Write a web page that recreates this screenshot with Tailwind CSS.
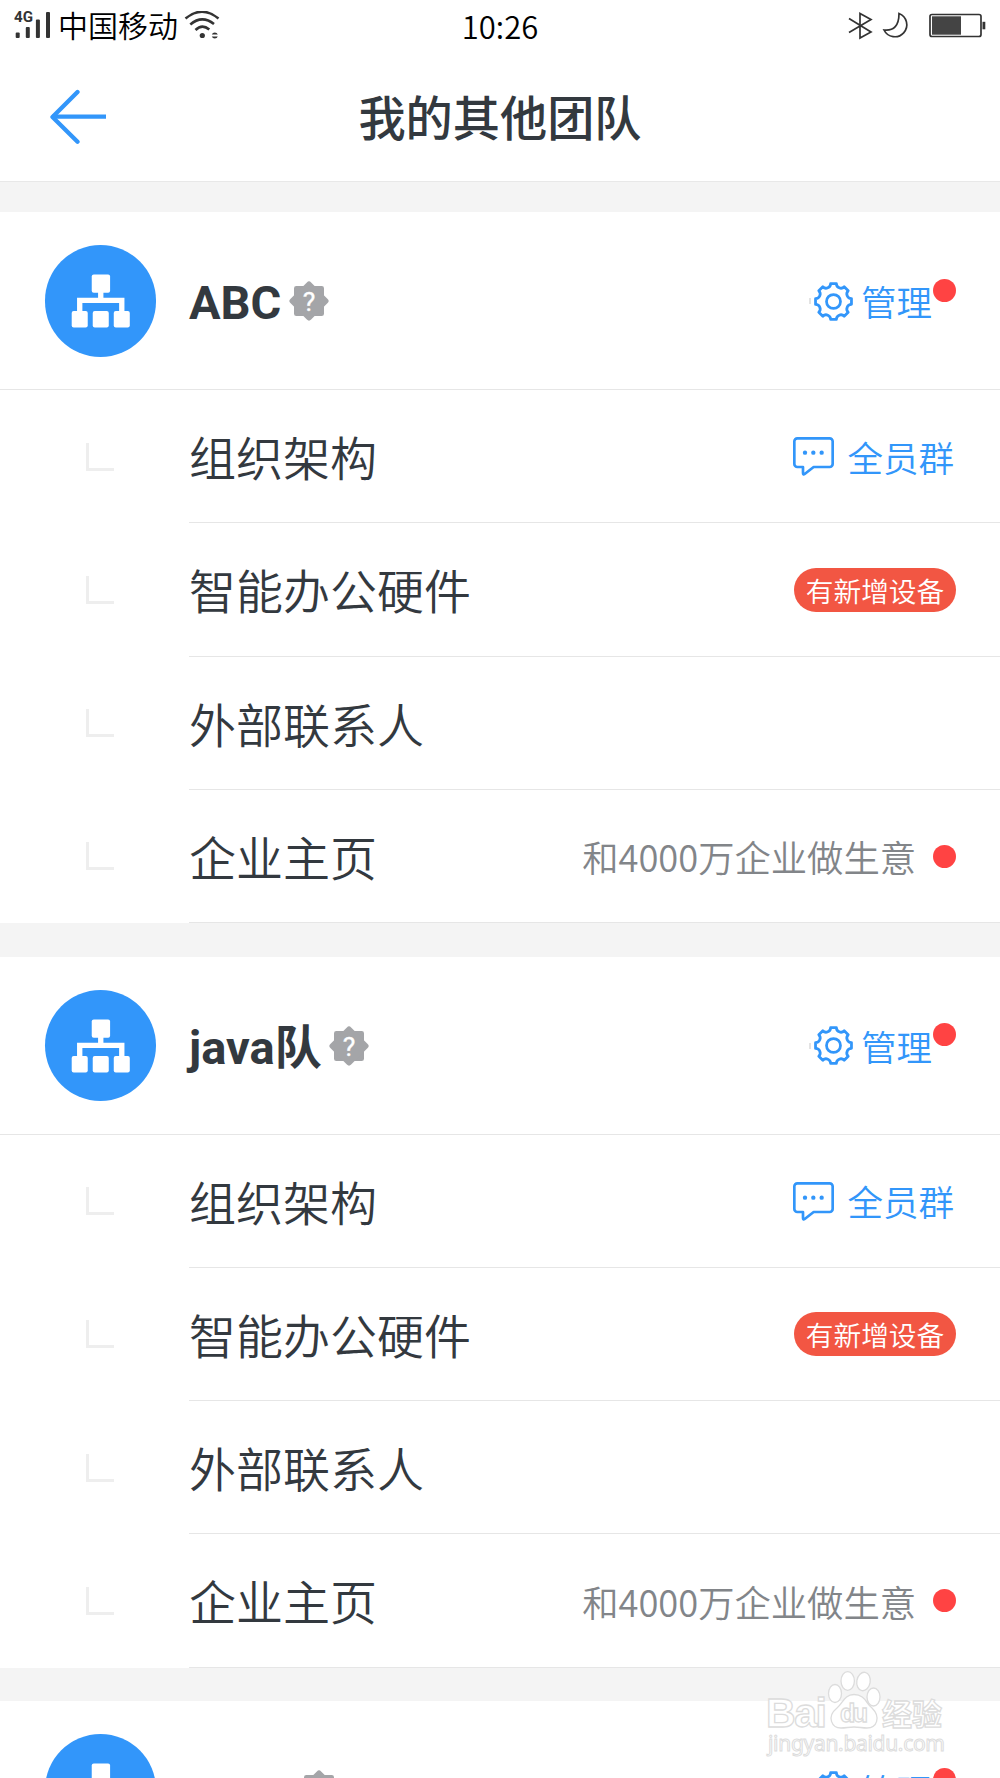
<!DOCTYPE html>
<html lang="zh-CN">

<head>
    <meta charset="UTF-8">
    <meta name="viewport" content="width=device-width, initial-scale=1.0">
    <title>我的其他团队</title>
    <script src="https://cdn.jsdelivr.net/npm/@tailwindcss/browser@4"></script>
</head>

<body class="bg-[#f4f4f4] font-['Noto_Sans_CJK_SC',sans-serif] font-[350] text-[#33393f] w-[1000px] h-[1778px] overflow-hidden relative">
    <!-- shared icons -->
    <svg class="hidden">
        <symbol id="org" viewBox="0 0 334 334">
            <g fill="#fff">
                <rect x="140" y="88" width="55" height="55" rx="6" />
                <rect x="80" y="198" width="48" height="49" rx="6" />
                <rect x="143" y="198" width="48" height="49" rx="6" />
                <rect x="206" y="198" width="48" height="49" rx="6" />
            </g>
            <path d="M167 140v26M104 200v-34h126v34" fill="none" stroke="#fff" stroke-width="16" />
        </symbol>
        <symbol id="unverified" viewBox="-60 -60 120 120">
            <rect x="-45" y="-45" width="90" height="90" rx="7" fill="#a4a5a8" />
            <rect x="-44" y="-44" width="88" height="88" rx="9" fill="#a4a5a8" transform="rotate(45)" />
            <text x="0" y="30" text-anchor="middle" font-family="Roboto, sans-serif" font-size="80" font-weight="400" fill="#fff" stroke="#fff">?</text>
        </symbol>
        <symbol id="gear" viewBox="-60 -60 120 120">
            <g fill="none" stroke="#3296fa" stroke-width="8.5" stroke-linejoin="round">
                <path d="M8.8-55.3A14 14 0 0 0 32.9-45.3L45.3-32.9A14 14 0 0 0 55.3-8.8V8.8A14 14 0 0 0 45.3 32.9L32.9 45.3A14 14 0 0 0 8.8 55.3H-8.8A14 14 0 0 0-32.9 45.3L-45.3 32.9A14 14 0 0 0-55.3 8.8V-8.8A14 14 0 0 0-45.3-32.9L-32.9-45.3A14 14 0 0 0-8.8-55.3Z" />
                <circle r="21.5" />
            </g>
        </symbol>
        <symbol id="chat" viewBox="0 0 123 117">
            <path d="M13 4h97a9 9 0 0 1 9 9v68a9 9 0 0 1-9 9H62L35 111q-5 4-5-3V90H13a9 9 0 0 1-9-9V13a9 9 0 0 1 9-9z" fill="none" stroke="#3296fa" stroke-width="8" stroke-linejoin="round" />
            <g fill="#3296fa">
                <circle cx="36" cy="47" r="6.5" />
                <circle cx="61" cy="47" r="6.5" />
                <circle cx="86" cy="47" r="6.5" />
            </g>
        </symbol>
    </svg>

    <header class="bg-white border-b border-[#e8e8e8] h-[182px]">
        <div class="h-[52px] grid grid-cols-3 items-center px-3.5 text-black">
            <div class="flex items-center">
                <svg class="w-[38px] h-[30px]" viewBox="0 0 38 30" fill="#333">
                    <text x="0" y="11" font-family="Roboto, sans-serif" font-size="14" font-weight="700" textLength="19" lengthAdjust="spacingAndGlyphs">4G</text>
                    <rect x="1.7" y="21.5" width="4" height="5.5" rx="1" />
                    <rect x="11.8" y="16" width="4" height="11" rx="1" />
                    <rect x="21.9" y="8.5" width="4" height="18.5" rx="1" />
                    <rect x="32" y="1" width="4" height="26" rx="1" />
                </svg>
                <span class="text-[30px] leading-none ml-1.5 pb-1">中国移动</span>
                <svg class="w-[36px] h-[30px] ml-1.5" viewBox="0 0 36 30">
                    <g fill="none" stroke="#333" stroke-width="2.6">
                        <path d="M1.5 7.5Q18-6 34.5 7.5" />
                        <path d="M6.3 13.500Q18 3.500 30 13" />
                        <path d="M11.5 19Q18 12.500 25.300 18.500" />
                    </g>
                    <circle cx="18.3" cy="24.5" r="2.6" fill="#333" />
                    <path d="M27.8 23.500a3.200 3.200 0 0 1 6 0zM27.800 25.500a3.200 3.200 0 0 0 6 0z" fill="#333" />
                </svg>
            </div>
            <div class="text-[31px] leading-none text-center pb-0.5">10:26</div>
            <svg class="w-[138px] h-[30px] justify-self-end" viewBox="0 0 138 30" fill="none" stroke="#333" stroke-width="1.7">
                <path d="M1 7.500l22 13.500-11 6V2.500l11 6L1 21.500" />
                <path d="M51 2.500q0 18-15 16.500a12 12 0 1 0 15-16.500z" />
                <rect x="82" y="3.5" width="51" height="22" rx="2" />
                <rect x="84" y="5.3" width="29" height="18.4" fill="#444" stroke="none" />
                <rect x="134.5" y="10.8" width="2.8" height="7.5" fill="#333" stroke="none" />
            </svg>
        </div>
        <div class="h-[129px] flex items-center justify-center relative">
            <svg class="absolute left-[49px] top-[37px] w-[58px] h-[56px]" viewBox="0 0 58 56" fill="none" stroke="#3296fa" stroke-width="4.3">
                <path d="M28.5 3L3.500 28l25 24.700" stroke-linecap="round" stroke-linejoin="round" />
                <path d="M3 27.700h54" />
            </svg>
            <h1 class="text-[47.2px] leading-none font-medium pb-0.5">我的其他团队</h1>
        </div>
    </header>

    <main id="teams" class="pt-[30px]"></main>

    <!-- watermark -->
    <svg class="absolute left-[760px] top-[1665px] w-[200px] h-[95px]" viewBox="0 0 200 95" fill="#fff" stroke="#dcdcdc" stroke-width="1.3">
        <text x="6" y="62" font-family="Liberation Sans, sans-serif" font-size="41" font-weight="700" textLength="61">Bai</text>
        <ellipse cx="75" cy="28.5" rx="6.5" ry="9" />
        <ellipse cx="87.7" cy="16" rx="6.7" ry="9.3" />
        <ellipse cx="103.5" cy="16.5" rx="6.7" ry="9.3" transform="rotate(10 103.5 16.5)" />
        <ellipse cx="113.5" cy="32" rx="6.5" ry="9" />
        <path d="M94 29.500c-10 0-11 9-17 13.500-11 9-5 20 4 20 5 0 8-1 13-1s8 1 13 1c10 0 14-11 5-20-6-4.500-7-13.500-18-13.500z" />
        <text x="80" y="57" font-family="Liberation Sans, sans-serif" font-size="25" font-weight="700" textLength="28">du</text>
        <text x="122" y="60" font-family="Noto Sans CJK SC, sans-serif" font-size="30" font-weight="700">经验</text>
        <text x="8" y="85.5" font-family="Noto Sans, sans-serif" font-size="21" font-weight="400" textLength="177" stroke-width="1">jingyan.baidu.com</text>
    </svg>

    <script>
        const teams = [
            { name: 'ABC', open: true },
            { name: 'java队', open: true },
            { name: '', open: false }
        ];

        const dot = '<span class="size-[23px] rounded-full bg-[#ff4343]"></span>';

        const rows = [
            {
                label: '组织架构',
                extra: `<svg class="w-[41px] h-[39px]"><use href="#chat" /></svg>
                    <span class="text-[35.5px] leading-none text-[#3296fa] ml-[13px] mr-0.5">全员群</span>`
            },
            {
                label: '智能办公硬件',
                extra: '<span class="w-[162px] h-[44px] rounded-full bg-[#f25643] text-white text-[27.7px] leading-[44px] text-center">有新增设备</span>'
            },
            { label: '外部联系人', extra: '' },
            {
                label: '企业主页',
                extra: `<span class="text-[36.3px] leading-none text-[#828589] mr-[17px]">和4000万企业做生意</span>${dot}`
            }
        ];

        const renderRow = row => `
            <li class="flex h-[133.25px]">
                <div class="w-[189px] shrink-0 flex items-center pl-[86px]">
                    <i class="size-7 border-l-3 border-b-3 border-[#eee]"></i>
                </div>
                <div class="flex-1 flex items-center border-b border-[#e6e6e6] pt-px pr-11">
                    <span class="text-[47px] leading-none mr-auto pb-0.5">${row.label}</span>
                    ${row.extra}
                </div>
            </li>`;

        const renderTeam = team => `
            <section class="bg-white mb-[33.5px]">
                <div class="h-[178px] flex items-center border-b border-[#e6e6e6] pt-px pl-[44.5px] pr-11">
                    <div class="size-[111.500px] rounded-full bg-[#3296fa] mr-[33px]"><svg class="size-full"><use href="#org" /></svg></div>
                    <h2 class="font-[Roboto,'Noto_Sans_CJK_SC',sans-serif] text-[47px] leading-none font-bold min-w-[93px] pt-[3px]">${team.name}</h2>
                    <svg class="size-10 ml-[7px] ${team.name ? '' : 'translate-x-[10px]'}"><use href="#unverified" /></svg>
                    <div class="ml-auto flex items-center">
                        <i class="w-0.5 h-1.5 bg-[#e3e3e3] mr-[3px]"></i>
                        <svg class="size-[39px]"><use href="#gear" /></svg>
                        <span class="text-[35.5px] leading-none text-[#3296fa] ml-2 mr-px">管理</span>
                        <span class="flex -translate-y-[11px]">${dot}</span>
                    </div>
                </div>
                ${team.open ? `<ul>${rows.map(renderRow).join('')}</ul>` : ''}
            </section>`;

        document.getElementById('teams').innerHTML = teams.map(renderTeam).join('');
    </script>
</body>

</html>
